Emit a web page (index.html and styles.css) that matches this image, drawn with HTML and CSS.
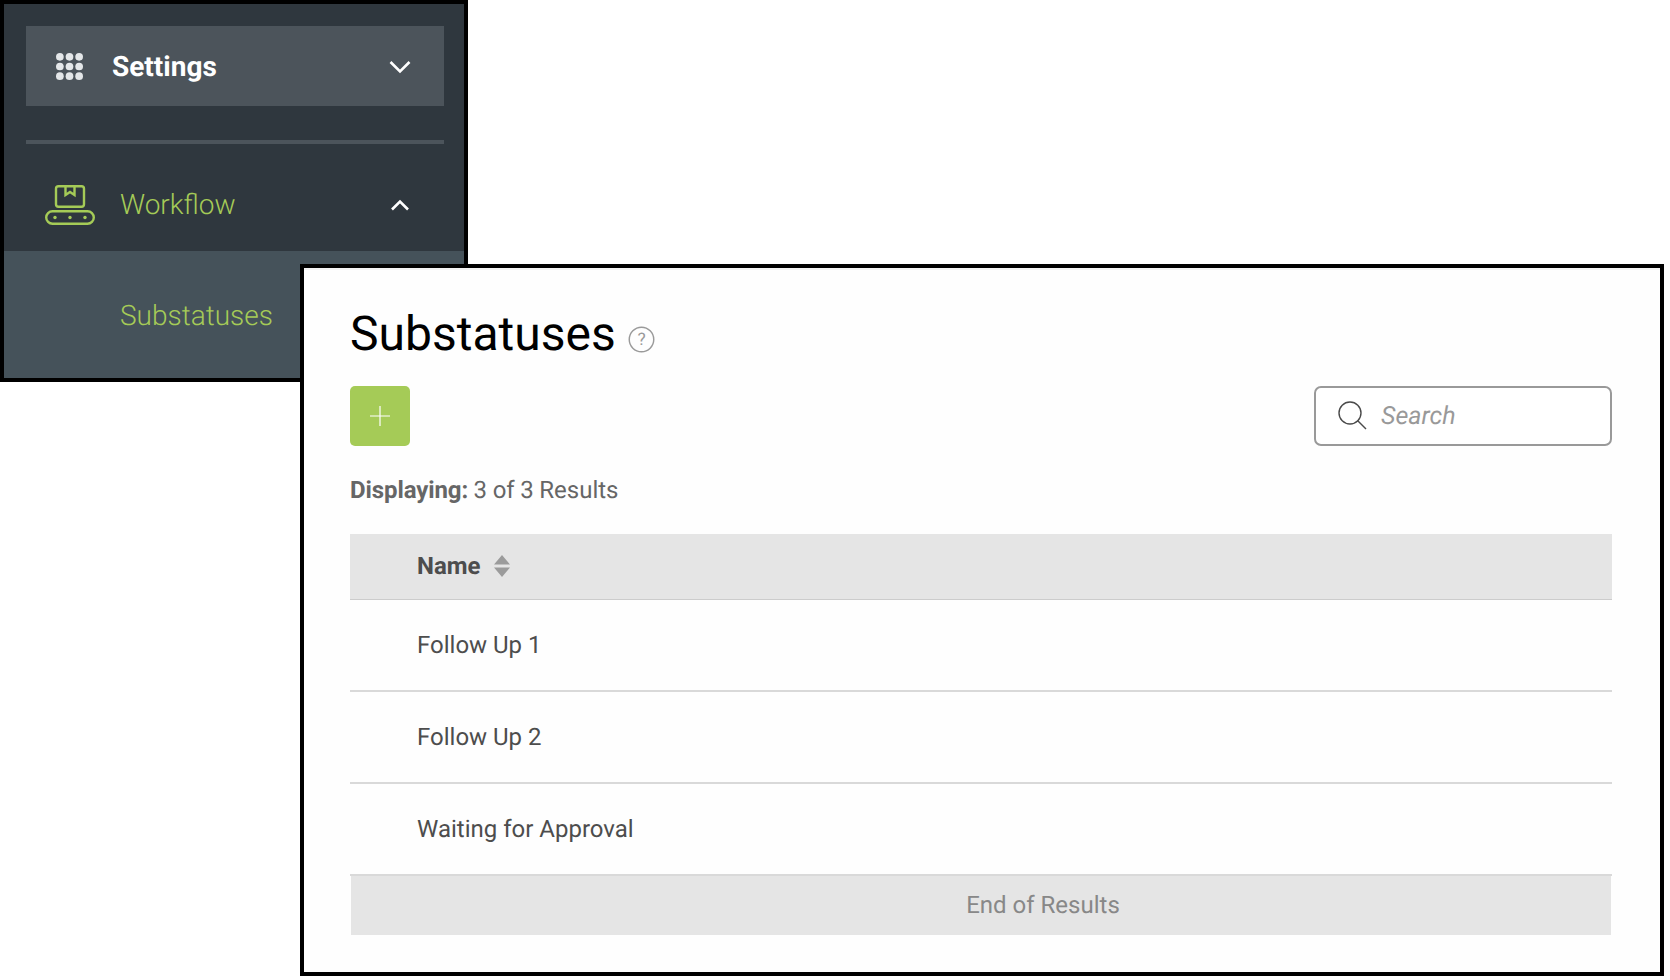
FILE: index.html
```html
<!DOCTYPE html>
<html>
<head>
  <title>Substatuses</title>
  <link rel="stylesheet" href="styles.css">
</head>
<body>
  <!-- Sidebar crop -->
  <nav class="sidebar">
    <div class="settings-row">
      <svg class="grid-icon" width="27" height="27" viewBox="0 0 28 28" fill="#e4e7e9">
        <circle cx="4" cy="4" r="4"/><circle cx="14" cy="4" r="4"/><circle cx="24" cy="4" r="4"/>
        <circle cx="4" cy="14" r="4"/><circle cx="14" cy="14" r="4"/><circle cx="24" cy="14" r="4"/>
        <circle cx="4" cy="24" r="4"/><circle cx="14" cy="24" r="4"/><circle cx="24" cy="24" r="4"/>
      </svg>
      <span class="settings-label">Settings</span>
      <svg class="chevron-down" width="22" height="14" viewBox="0 0 22 14" fill="none" stroke="#fff" stroke-width="2.6"><path d="M1.5 2 L11 11.5 L20.5 2"/></svg>
    </div>
    <div class="divider"></div>
    <div class="workflow-row">
      <svg class="belt-icon" width="50" height="40" viewBox="0 0 50 40" fill="none" stroke="#a5cb57" stroke-width="2.4">
        <rect x="11" y="1.2" width="28" height="20.6" rx="2.5"/>
        <path d="M20.5 1.2 V10 L25 7 L29.5 10 V1.2"/>
        <rect x="1.2" y="26.2" width="47.6" height="12.6" rx="6.3"/>
        <circle cx="10" cy="32.5" r="1.7" fill="#a5cb57" stroke="none"/>
        <circle cx="25" cy="32.5" r="1.7" fill="#a5cb57" stroke="none"/>
        <circle cx="40" cy="32.5" r="1.7" fill="#a5cb57" stroke="none"/>
      </svg>
      <span class="workflow-label">Workflow</span>
      <svg class="chevron-up" width="20" height="12" viewBox="0 0 20 12" fill="none" stroke="#fff" stroke-width="2.6"><path d="M2 10.5 L10 2.5 L18 10.5"/></svg>
    </div>
    <div class="sub-item">
      <span class="sub-label">Substatuses</span>
    </div>
  </nav>

  <!-- Page crop, sits over the sidebar -->
  <main class="panel">
    <div class="title-row">
      <h1>Substatuses</h1>
      <svg class="help-icon" width="27" height="27" viewBox="0 0 28 28">
        <circle cx="14" cy="14" r="12.7" fill="none" stroke="#9a9a9a" stroke-width="1.5"/>
        <text x="14" y="20" text-anchor="middle" class="help-mark">?</text>
      </svg>
    </div>
    <div class="toolbar">
      <button type="button" class="add-button">
        <svg width="20" height="20" viewBox="0 0 20 20" stroke="#fff" stroke-width="1.2"><path d="M0 10 H20 M10 0 V20"/></svg>
      </button>
      <div class="search">
        <svg width="30" height="30" viewBox="0 0 30 30" fill="none" stroke="#4a4a4a" stroke-width="1.4"><circle cx="13" cy="12" r="11"/><path d="M20.5 19.5 L29 28"/></svg>
        <span class="search-text">Search</span>
      </div>
    </div>
    <p class="count"><b>Displaying:</b> 3 of 3 Results</p>
    <div class="table">
      <div class="table-head">
        <span>Name</span>
        <svg width="16" height="22" viewBox="0 0 16 22" fill="#9b9b9b"><path d="M8 0 L16 9.5 H0 Z M0 12.5 H16 L8 22 Z"/></svg>
      </div>
      <div class="table-row">Follow Up 1</div>
      <div class="table-row">Follow Up 2</div>
      <div class="table-row">Waiting for Approval</div>
      <div class="table-foot">End of Results</div>
    </div>
  </main>
</body>
</html>
```

FILE: styles.css
```css
body {
  margin: 0;
  padding: 0;
  background-color: #fff;
  font-family: Roboto, Arial, sans-serif;
  text-rendering: geometricPrecision;
  height: 980px;
  overflow: hidden;
}

/* Sidebar */
.sidebar {
  width: 460px;
  height: 374px;
  background-color: #2f373e;
  border: 4px solid #000;
  display: flex;
  flex-direction: column;
}

.settings-row {
  display: flex;
  align-items: center;
  height: 80px;
  margin: 22px 20px 0 22px;
  padding: 0 33px 0 30px;
  background-color: #4c545b;
}

.grid-icon {
  margin-right: 29px;
}

.settings-label {
  flex: 1;
  color: #fff;
  font-size: 28px;
  font-weight: 700;
}

.chevron-down {
  margin-top: 2px;
}

.divider {
  height: 4px;
  margin: 34px 20px 0 22px;
  background-color: #4c545b;
}

.workflow-row {
  display: flex;
  align-items: center;
  box-sizing: border-box;
  height: 107px;
  padding: 15px 54px 0 41px;
}

.belt-icon {
  margin-right: 25px;
}

.workflow-label {
  flex: 1;
  margin-top: -2px;
  color: #a5cb57;
  font-size: 28px;
  font-weight: 300;
}

.sub-item {
  flex: 1;
  display: flex;
  align-items: center;
  padding: 2px 0 0 116px;
  background-color: #45525a;
}

.sub-label {
  color: #a5cb57;
  font-size: 28px;
  font-weight: 300;
}

/* Main panel */
.panel {
  position: absolute;
  left: 300px;
  top: 264px;
  width: 1262px;
  height: 704px;
  padding: 0 48px 0 46px;
  background-color: #fefefe;
  border: 4px solid #000;
  box-shadow: inset 0 2px 0 #f3f3f3;
}

.title-row {
  display: flex;
  align-items: center;
  box-sizing: border-box;
  height: 118px;
  padding-top: 13px;
}

h1 {
  margin: 0 12px 0 0;
  font-size: 48px;
  font-weight: 400;
  color: #000;
}

.help-icon {
  margin-top: 11px;
}

.help-mark {
  font-size: 18px;
  fill: #9a9a9a;
}

.toolbar {
  display: flex;
  justify-content: space-between;
}

.add-button {
  width: 60px;
  height: 60px;
  padding: 0;
  border: none;
  border-radius: 5px;
  background-color: #a5cb57;
  display: flex;
  align-items: center;
  justify-content: center;
}

.search {
  width: 298px;
  height: 60px;
  box-sizing: border-box;
  display: flex;
  align-items: center;
  gap: 14px;
  padding-left: 21px;
  border: 2px solid #999;
  border-radius: 7px;
  background-color: #fff;
}

.search-text {
  font-size: 25px;
  font-style: italic;
  color: #999;
}

.count {
  margin: 27px 0 0;
  height: 34px;
  line-height: 34px;
  font-size: 24px;
  word-spacing: -0.4px;
  color: #666;
}

.count b {
  font-weight: 700;
  letter-spacing: -0.1px;
}

.table {
  margin-top: 27px;
}

.table-head {
  display: flex;
  align-items: center;
  box-sizing: border-box;
  gap: 13px;
  height: 66px;
  padding: 0 0 2px 67px;
  background-color: #e5e5e5;
  border-bottom: 1px solid #ccc;
  font-size: 24px;
  font-weight: 700;
  color: #4d4d4d;
}

.table-row {
  display: flex;
  align-items: center;
  height: 90px;
  padding-left: 67px;
  border-bottom: 2px solid #d9d9d9;
  font-size: 24px;
  color: #4d4d4d;
}

.table-foot {
  height: 59px;
  line-height: 58px;
  margin: 0 1px;
  padding-left: 124px;
  text-align: center;
  background-color: #e5e5e5;
  font-size: 24px;
  color: #888;
}
```
